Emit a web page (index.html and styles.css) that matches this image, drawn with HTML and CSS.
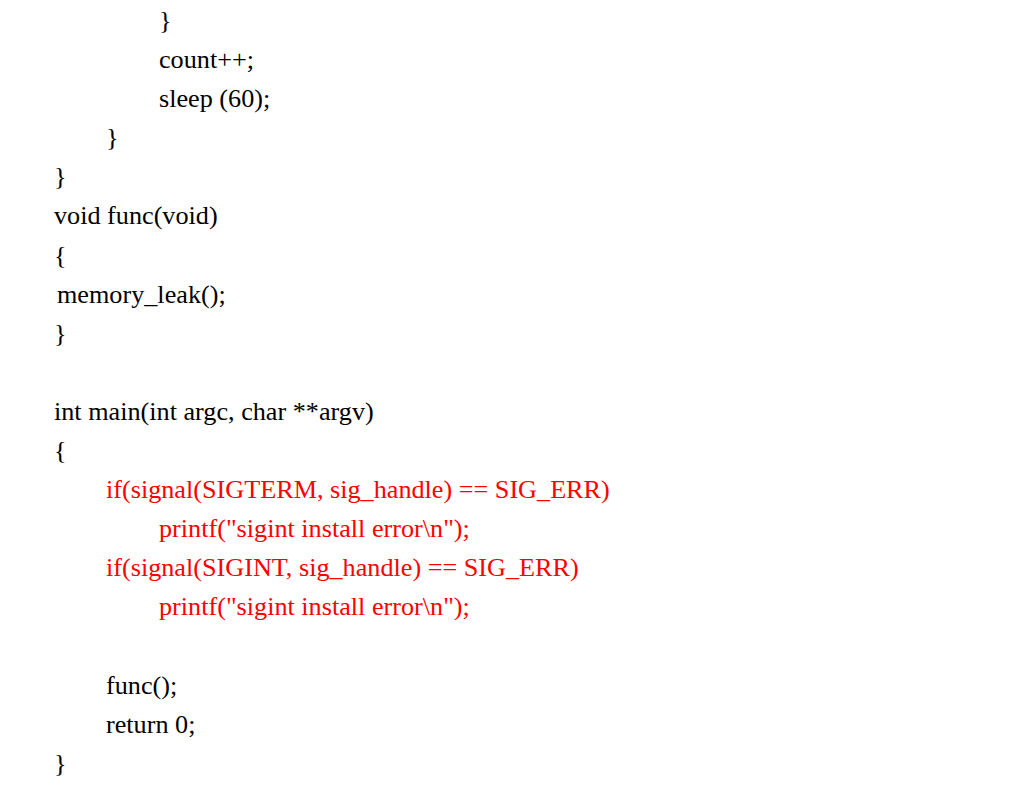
FILE: index.html
```html
<!DOCTYPE html>
<html>
<head>
<meta charset="utf-8">
<link rel="stylesheet" href="styles.css">
</head>
<body>
<div class="code">
  <div class="line i2">}</div>
  <div class="line i2">count++;</div>
  <div class="line i2">sleep (60);</div>
  <div class="line i1">}</div>
  <div class="line">}</div>
  <div class="line">void func(void)</div>
  <div class="line">{</div>
  <div class="line shift">memory_leak();</div>
  <div class="line">}</div>
  <div class="line blank"></div>
  <div class="line">int main(int argc, char **argv)</div>
  <div class="line">{</div>
  <div class="line i1 red">if(signal(SIGTERM, sig_handle) == SIG_ERR)</div>
  <div class="line i2 red">printf("sigint install error\n");</div>
  <div class="line i1 red">if(signal(SIGINT, sig_handle) == SIG_ERR)</div>
  <div class="line i2 red">printf("sigint install error\n");</div>
  <div class="line blank"></div>
  <div class="line i1">func();</div>
  <div class="line i1">return 0;</div>
  <div class="line">}</div>
</div>
</body>
</html>
```
FILE: styles.css
```css
html, body {
  margin: 0;
  padding: 0;
  background: #ffffff;
}
.code {
  font-family: "Liberation Serif", "Times New Roman", serif;
  font-size: 26.2px;
  line-height: 39.1px;
  color: #000000;
  padding: 1px 0 0 54px;
}
.line {
  height: 39.1px;
  white-space: pre;
}
.i1 { padding-left: 52px; }
.i2 { padding-left: 105px; }
.shift { padding-left: 3px; }
.red { color: #ff0000; }
```
